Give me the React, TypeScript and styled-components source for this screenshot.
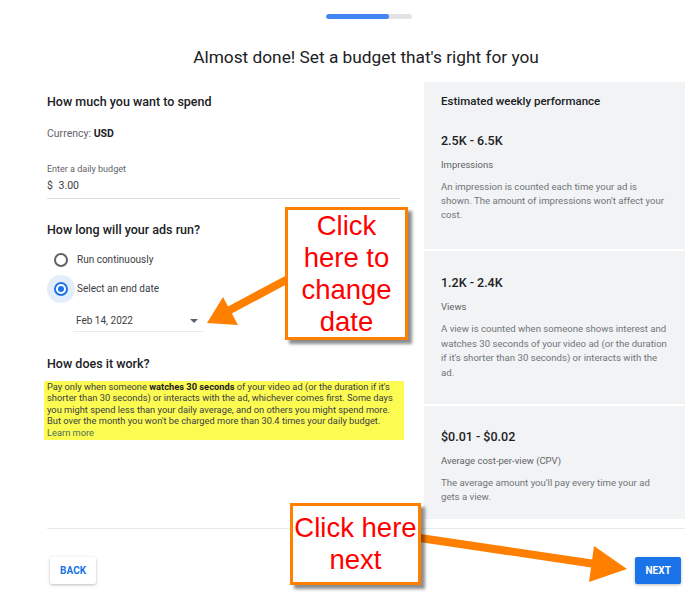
import styled, { createGlobalStyle } from 'styled-components'

const GlobalStyle = createGlobalStyle`
  html, body {
    margin: 0;
    padding: 0;
    background: #fff;
    font-family: Roboto, "Liberation Sans", Arial, sans-serif;
    color: #202124;
  }
`

const Page = styled.div`
  position: relative;
  width: 700px;
  height: 608px;
  box-sizing: border-box;
  padding: 14px 15px 0 47px;
  overflow: hidden;
`

const Progress = styled.div`
  width: 86px;
  height: 5px;
  margin-left: 279px;
  border-radius: 3px;
  background: #e3e3e3;
  overflow: hidden;
`

const ProgressFill = styled.div`
  height: 100%;
  border-radius: 3px;
  background: #4285f4;
`

const Title = styled.h1`
  margin: 26px 0 13px;
  text-align: center;
  font-size: 17.3px;
  line-height: 24px;
  font-weight: 400;
  color: #202124;
`

const Columns = styled.div`
  display: grid;
  grid-template-columns: 353px 261px;
  column-gap: 24px;
  align-items: start;
`

const LeftCol = styled.div`
  display: flex;
  flex-direction: column;
`

const SectionHeading = styled.h2<{ $top: number }>`
  margin: ${(p) => p.$top}px 0 0;
  font-size: 12.5px;
  line-height: 20px;
  font-weight: 500;
  color: #202124;
`

const Currency = styled.div`
  margin-top: 14px;
  font-size: 10.5px;
  line-height: 16px;
  color: #5f6368;

  b {
    color: #202124;
    font-weight: 700;
  }
`

const Field = styled.div`
  margin-top: 21px;
  padding-bottom: 4px;
  border-bottom: 1px solid #dadce0;
`

const FieldLabel = styled.div`
  font-size: 9px;
  line-height: 12px;
  color: #5f6368;
`

const FieldValue = styled.div`
  margin-top: 3px;
  font-size: 10.5px;
  line-height: 16px;
  color: #3c4043;
  word-spacing: 3px;
`

const RadioGroup = styled.div`
  margin-top: 5px;
  display: flex;
  flex-direction: column;
`

const RadioRow = styled.label`
  display: flex;
  align-items: center;
  height: 29px;
  font-size: 10px;
  color: #3c4043;
`

const RadioDot = styled.span<{ $checked?: boolean }>`
  position: relative;
  width: 14px;
  height: 14px;
  margin: 0 9px 0 7px;
  box-sizing: border-box;
  border-radius: 50%;
  border: 2px solid ${(p) => (p.$checked ? '#1a73e8' : '#5f6368')};
  box-shadow: ${(p) => (p.$checked ? '0 0 0 7px rgba(26, 115, 232, 0.12)' : 'none')};

  &::after {
    content: '';
    display: ${(p) => (p.$checked ? 'block' : 'none')};
    position: absolute;
    inset: 2px;
    border-radius: 50%;
    background: #1a73e8;
  }
`

const DateSelect = styled.div`
  width: 130px;
  margin-left: 26px;
  box-sizing: border-box;
  padding: 11px 5px 3px 3px;
  display: flex;
  align-items: center;
  justify-content: space-between;
  border-bottom: 1px solid #e8eaed;
  font-size: 10px;
  line-height: 14px;
  color: #3c4043;
`

const Caret = styled.span`
  width: 0;
  height: 0;
  border-left: 4px solid transparent;
  border-right: 4px solid transparent;
  border-top: 4px solid #5f6368;
`

const Highlight = styled.p`
  margin: 7px -4px 0 -3px;
  padding: 0 3px 2px;
  background: #fbfb52;
  font-size: 9.3px;
  line-height: 11.4px;
  color: #3c4043;

  b {
    font-weight: 700;
    color: #202124;
  }
`

const LearnMore = styled.span`
  display: block;
  color: #4d6e5e;
`

const Panel = styled.div`
  display: flex;
  flex-direction: column;
  gap: 2px;
`

const Card = styled.div<{ $top: number; $bottom: number }>`
  background: #f1f3f4;
  padding: ${(p) => p.$top}px 17px ${(p) => p.$bottom}px;
`

const PanelHeading = styled.div`
  font-size: 11.5px;
  line-height: 18px;
  font-weight: 500;
  color: #202124;
  margin-bottom: 21px;
`

const Metric = styled.div`
  font-size: 12.5px;
  line-height: 20px;
  font-weight: 500;
  color: #202124;
`

const MetricLabel = styled.div`
  margin-top: 7px;
  font-size: 9.5px;
  line-height: 14px;
  color: #5f6368;
`

const MetricText = styled.div<{ $lh: number }>`
  margin-top: 8px;
  font-size: 9.6px;
  line-height: ${(p) => p.$lh}px;
  color: #70757a;
`

const Divider = styled.div`
  margin-top: 9px;
  height: 1px;
  background: #e8eaed;
`

const Footer = styled.div`
  display: flex;
  justify-content: space-between;
  padding: 28px 4px 0 3px;
`

const Button = styled.button<{ $primary?: boolean }>`
  height: 27px;
  padding: 0 10px;
  border: none;
  border-radius: 2px;
  font-family: Roboto, sans-serif;
  font-size: 10px;
  font-weight: 700;
  letter-spacing: 0.1px;
  background: ${(p) => (p.$primary ? '#1a73e8' : '#fff')};
  color: ${(p) => (p.$primary ? '#fff' : '#1a73e8')};
  box-shadow: 0 1px 3px rgba(60, 64, 67, 0.35);
`

const Callout = styled.div<{ $x: number; $y: number; $w: number; $h: number }>`
  position: absolute;
  left: ${(p) => p.$x}px;
  top: ${(p) => p.$y}px;
  width: ${(p) => p.$w}px;
  height: ${(p) => p.$h}px;
  box-sizing: border-box;
  display: flex;
  align-items: center;
  justify-content: center;
  text-align: center;
  border: 3px solid #ff8000;
  background: #fff;
  box-shadow: 4px 4px 3px rgba(0, 0, 0, 0.45);
  font-family: "Liberation Sans", Arial, sans-serif;
  font-size: 27.5px;
  line-height: 32px;
  color: #ff0000;
`

const ArrowLayer = styled.svg`
  position: absolute;
  left: 0;
  top: 0;
  pointer-events: none;
`

export default function App() {
  return (
    <>
      <GlobalStyle />
      <Page>
        <Progress>
          <ProgressFill style={{ width: '73%' }} />
        </Progress>
        <Title>Almost done! Set a budget that's right for you</Title>
        <Columns>
          <LeftCol>
            <SectionHeading $top={10}>How much you want to spend</SectionHeading>
            <Currency>
              Currency: <b>USD</b>
            </Currency>
            <Field>
              <FieldLabel>Enter a daily budget</FieldLabel>
              <FieldValue>$ 3.00</FieldValue>
            </Field>
            <SectionHeading $top={21}>How long will your ads run?</SectionHeading>
            <RadioGroup>
              <RadioRow>
                <RadioDot />
                Run continuously
              </RadioRow>
              <RadioRow>
                <RadioDot $checked />
                Select an end date
              </RadioRow>
            </RadioGroup>
            <DateSelect>
              Feb 14, 2022
              <Caret />
            </DateSelect>
            <SectionHeading $top={22}>How does it work?</SectionHeading>
            <Highlight>
              Pay only when someone <b>watches 30 seconds</b> of your video ad (or the duration if it's shorter
              than 30 seconds) or interacts with the ad, whichever comes first. Some days you might spend less
              than your daily average, and on others you might spend more. But over the month you won't be
              charged more than 30.4 times your daily budget.
              <LearnMore>Learn more</LearnMore>
            </Highlight>
          </LeftCol>
          <Panel>
            <Card $top={10} $bottom={27}>
              <PanelHeading>Estimated weekly performance</PanelHeading>
              <Metric>2.5K - 6.5K</Metric>
              <MetricLabel>Impressions</MetricLabel>
              <MetricText $lh={14}>
                An impression is counted each time your ad is shown. The amount of impressions won't affect
                your cost.
              </MetricText>
            </Card>
            <Card $top={22} $bottom={24}>
              <Metric>1.2K - 2.4K</Metric>
              <MetricLabel>Views</MetricLabel>
              <MetricText $lh={14.6}>
                A view is counted when someone shows interest and watches 30 seconds of your video ad (or the
                duration if it's shorter than 30 seconds) or interacts with the ad.
              </MetricText>
            </Card>
            <Card $top={21} $bottom={15}>
              <Metric>$0.01 - $0.02</Metric>
              <MetricLabel>Average cost-per-view (CPV)</MetricLabel>
              <MetricText $lh={14}>The average amount you'll pay every time your ad gets a view.</MetricText>
            </Card>
          </Panel>
        </Columns>
        <Divider />
        <Footer>
          <Button>BACK</Button>
          <Button $primary>NEXT</Button>
        </Footer>

        <ArrowLayer width="700" height="608" viewBox="0 0 700 608">
          <g fill="#ff8000">
            <line x1="288" y1="279" x2="228" y2="311" stroke="#ff8000" strokeWidth="8" />
            <polygon points="207,323 223,297 238,325" />
            <line x1="420" y1="538" x2="595" y2="564" stroke="#ff8000" strokeWidth="8" />
            <polygon points="627,569 594,546 589,582" />
          </g>
        </ArrowLayer>
        <Callout $x={285} $y={207} $w={123} $h={133}>
          Click
          <br />
          here to
          <br />
          change
          <br />
          date
        </Callout>
        <Callout $x={290} $y={503} $w={131} $h={82}>
          Click here
          <br />
          next
        </Callout>
      </Page>
    </>
  )
}
